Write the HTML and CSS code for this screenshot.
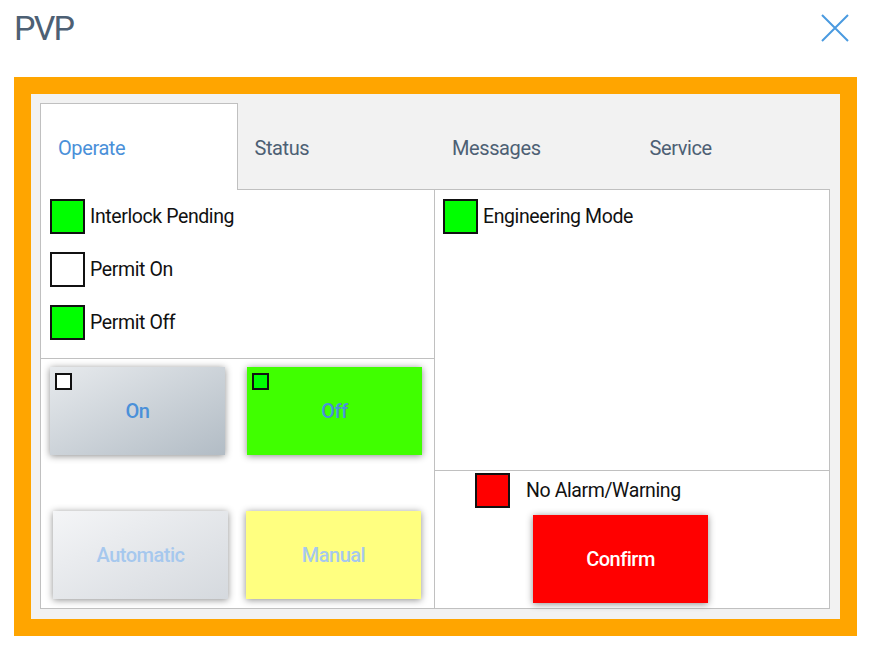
FILE: index.html
```html
<!DOCTYPE html>
<html lang="en">

<head>
    <meta charset="utf-8">
    <title>PVP</title>
    <link rel="stylesheet" href="styles.css">
</head>

<body>
    <!-- header -->
    <header class="dialog-header">
        <h1 class="dialog-header__title">PVP</h1>
        <button class="dialog-header__close" aria-label="Close">
            <svg width="28" height="28" viewBox="0 0 28 28">
                <path d="M1 1 L27 27 M27 1 L1 27" stroke="#4a9ae0" stroke-width="2" fill="none" />
            </svg>
        </button>
    </header>

    <!-- faceplate -->
    <div class="faceplate">
        <nav class="tabs">
            <div class="tabs__tab tabs__tab--active">Operate</div>
            <div class="tabs__tab">Status</div>
            <div class="tabs__tab">Messages</div>
            <div class="tabs__tab">Service</div>
        </nav>

        <div class="panel">
            <!-- left column -->
            <div class="panel__column panel__column--left">
                <div class="indicators">
                    <div class="indicator">
                        <span class="lamp lamp--green"></span>Interlock Pending
                    </div>
                    <div class="indicator">
                        <span class="lamp"></span>Permit On
                    </div>
                    <div class="indicator">
                        <span class="lamp lamp--green"></span>Permit Off
                    </div>
                </div>
                <div class="commands">
                    <button class="cmd cmd--on">
                        <span class="cmd__check"></span>On
                    </button>
                    <button class="cmd cmd--off">
                        <span class="cmd__check cmd__check--green"></span>Off
                    </button>
                    <button class="cmd cmd--auto cmd--disabled">Automatic</button>
                    <button class="cmd cmd--manual cmd--disabled">Manual</button>
                </div>
            </div>

            <!-- right column -->
            <div class="panel__column">
                <div class="indicators indicators--right">
                    <div class="indicator">
                        <span class="lamp lamp--green"></span>Engineering Mode
                    </div>
                </div>
                <div class="alarm">
                    <div class="alarm__row">
                        <span class="lamp lamp--red"></span>
                        <span class="alarm__text">No Alarm/Warning</span>
                    </div>
                    <button class="cmd cmd--confirm">Confirm</button>
                </div>
            </div>
        </div>
    </div>
</body>

</html>
```

FILE: styles.css
```css
* {
    box-sizing: border-box;
}

body {
    margin: 0;
    background-color: #ffffff;
    font-family: Roboto, 'Liberation Sans', sans-serif;
}

/* ====== */
/* Header */
/* ====== */
.dialog-header {
    display: flex;
    justify-content: space-between;
    align-items: flex-start;
    height: 77px;
    padding: 0 22px 0 14px;
}

.dialog-header__title {
    margin: 8px 0 0;
    font-size: 34px;
    font-weight: 400;
    letter-spacing: -1.8px;
    color: #4d6074;
}

.dialog-header__close {
    margin-top: 14px;
    padding: 0;
    border: none;
    background: none;
    line-height: 0;
}

/* ========= */
/* Faceplate */
/* ========= */
.faceplate {
    margin: 0 14px;
    border: 17px solid #ffa500;
    background-color: #f2f2f2;
    padding: 9px 10px 10px 9px;
}

.tabs {
    display: flex;
    height: 86px;
}

.tabs__tab {
    width: 198px;
    padding: 33px 0 0 17px;
    font-size: 20px;
    letter-spacing: -0.4px;
    color: #4d6074;
}

.tabs__tab--active {
    position: relative;
    z-index: 1;
    height: 87px;
    background-color: #ffffff;
    border: 1px solid #c0c0c0;
    border-bottom: none;
    padding-top: 32px;
    color: #4a90d9;
}

.panel {
    display: grid;
    grid-template-columns: 394px 1fr;
    height: 420px;
    border: 1px solid #c0c0c0;
    background-color: #ffffff;
}

.panel__column {
    display: flex;
    flex-direction: column;
}

.panel__column--left {
    border-right: 1px solid #c0c0c0;
}

/* ========== */
/* Indicators */
/* ========== */
.indicators {
    display: flex;
    flex-direction: column;
    gap: 18px;
    height: 169px;
    padding: 9px 9px 0;
    border-bottom: 1px solid #c0c0c0;
}

.indicators--right {
    height: 281px;
    padding-left: 8px;
}

.indicator {
    display: flex;
    align-items: center;
    gap: 5px;
    font-size: 19.5px;
    letter-spacing: -0.4px;
    color: #111111;
}

.lamp {
    flex: none;
    width: 35px;
    height: 35px;
    border: 2px solid #111111;
    background-color: #ffffff;
}

.lamp--green {
    background-color: #00ff00;
}

.lamp--red {
    background-color: #ff0000;
}

/* ======== */
/* Commands */
/* ======== */
.commands {
    display: grid;
    grid-template-columns: 175px 175px;
    grid-template-rows: 88px 88px;
    column-gap: 22px;
    row-gap: 56px;
    padding: 8px 0 0 9px;
}

.cmd {
    position: relative;
    width: 175px;
    height: 88px;
    border: none;
    font-family: Roboto, 'Liberation Sans', sans-serif;
    font-size: 20px;
    font-weight: 500;
    letter-spacing: -0.5px;
    color: #4a90d9;
    box-shadow: 0 1px 7px rgba(0, 0, 0, 0.45);
}

.cmd--on {
    background: linear-gradient(to bottom right, #e7eaed, #b2bcc5);
}

.cmd--off {
    background-color: #40ff00;
}

.cmd--auto {
    margin-left: 3px;
    background: linear-gradient(to bottom right, #f4f5f7, #d5d9de);
}

.cmd--manual {
    margin-left: -1px;
    background-color: #ffff80;
}

.cmd--disabled {
    color: #a6c8ee;
}

.cmd--confirm {
    margin-left: 98px;
    background-color: #ff0000;
    color: #ffffff;
}

.cmd__check {
    position: absolute;
    top: 6px;
    left: 5px;
    width: 17px;
    height: 17px;
    border: 2px solid #111111;
    background-color: #ffffff;
}

.cmd__check--green {
    background-color: #00ff00;
}

/* ===== */
/* Alarm */
/* ===== */
.alarm {
    display: flex;
    flex-direction: column;
    gap: 7px;
    padding-top: 2px;
}

.alarm__row {
    display: flex;
    align-items: center;
    gap: 16px;
    padding-left: 40px;
}

.alarm__text {
    font-size: 19.5px;
    letter-spacing: -0.4px;
    color: #111111;
}
```
